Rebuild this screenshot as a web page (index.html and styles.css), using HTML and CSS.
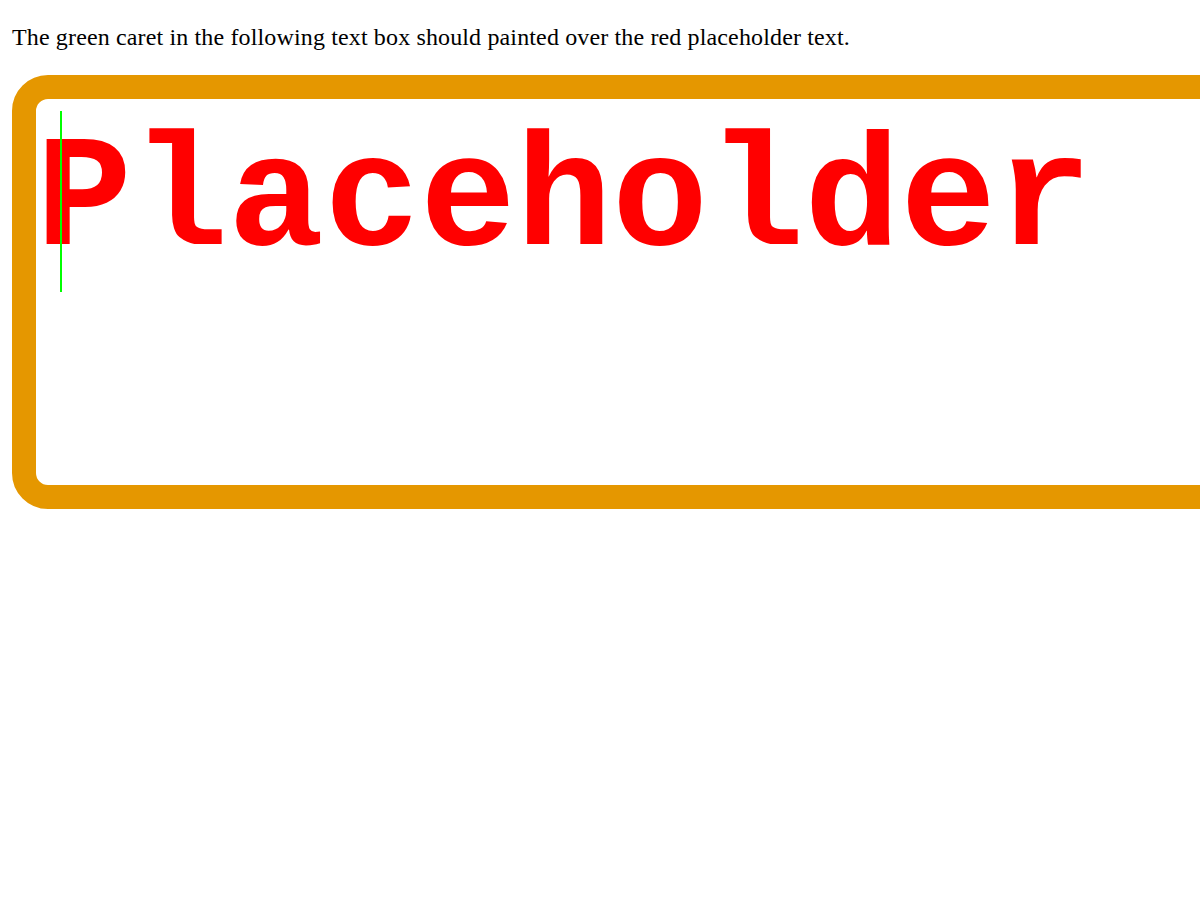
FILE: index.html
```html
<!DOCTYPE html>
<html>
<head>
<meta charset="utf-8">
<link rel="stylesheet" href="styles.css">
</head>
<body>
<div class="page">
  <p class="note">The green caret in the following text box should painted over the red placeholder text.</p>
  <div class="box">
    <div class="placeholder">Placeholder</div>
    <div class="caret"></div>
  </div>
</div>
</body>
</html>
```
FILE: styles.css
```css
body {
  margin: 0;
  background: #fff;
  font-family: "Liberation Serif", "Times New Roman", serif;
}
.page {
  width: 1200px;
  height: 900px;
  box-sizing: border-box;
  padding: 24px 0 0 12px;
  overflow: hidden;
}
.note {
  font-size: 24px;
  letter-spacing: 0.14px;
  margin: 0 0 24px;
  padding: 0;
  color: #000;
  white-space: nowrap;
}
.box {
  position: relative;
  box-sizing: border-box;
  width: 1400px;
  height: 434px;
  border: 24px solid #e59700;
  border-radius: 36px;
  padding: 12px 0 0 0;
  background: #fff;
}
.placeholder {
  font-family: Cousine, "Courier New", "Liberation Mono", monospace;
  font-weight: 700;
  font-size: 160px;
  line-height: normal;
  color: #ff0000;
  white-space: nowrap;
}
.caret {
  position: absolute;
  left: 24px;
  top: 12px;
  width: 2px;
  height: 181px;
  background: #00ff00;
}
```
